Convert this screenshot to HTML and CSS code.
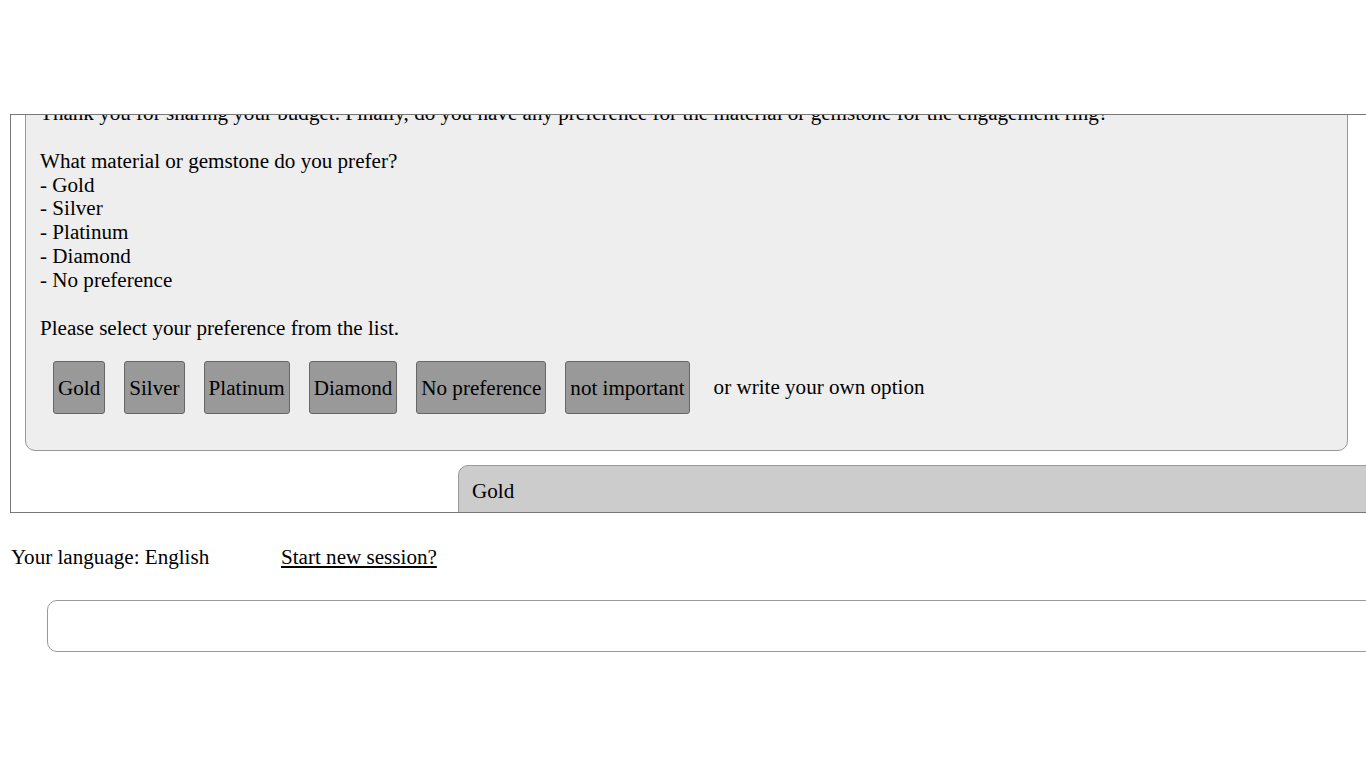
FILE: index.html
```html
<!DOCTYPE html>
<html lang="en">
<head>
<meta charset="utf-8">
<title>Chat</title>
<link rel="stylesheet" href="styles.css">
</head>
<body>
<div class="page">
  <div class="top-space"></div>
  <div class="chat">
    <div class="chat-content">
      <div class="msg bot">
        <div class="msg-text">Thank you for sharing your budget. Finally, do you have any preference for the material or gemstone for the engagement ring?

What material or gemstone do you prefer?
- Gold
- Silver
- Platinum
- Diamond
- No preference

Please select your preference from the list.</div>
        <div class="options">
          <button class="opt">Gold</button>
          <button class="opt">Silver</button>
          <button class="opt">Platinum</button>
          <button class="opt">Diamond</button>
          <button class="opt">No preference</button>
          <button class="opt">not important</button>
          <span class="own">or write your own option</span>
        </div>
      </div>
      <div class="msg user">Gold</div>
    </div>
  </div>
  <div class="status">
    <span class="lang">Your language: English</span>
    <a class="new-session" href="#">Start new session?</a>
  </div>
  <div class="input-row">
    <input class="input" type="text">
  </div>
</div>
</body>
</html>
```

FILE: styles.css
```css
html, body {
  margin: 0;
  padding: 0;
  overflow: hidden;
  background: #fff;
}

body {
  font-family: "Liberation Serif", "Times New Roman", serif;
  font-size: 21.1px;
  color: #000;
}

.page {
  padding-left: 10px;
  width: 1500px;
}

.top-space {
  height: 114px;
}

.chat {
  width: 1420px;
  height: 397px;
  border: 1px solid #777;
  overflow: hidden;
}

.chat-content {
  margin-top: -28px;
}

.msg {
  border: 1px solid #999;
  border-radius: 10px;
}

.bot {
  margin-left: 14px;
  width: 1293px;
  padding: 14px 14px 0 14px;
  background: #eee;
}

.msg-text {
  white-space: pre-line;
  line-height: 23.85px;
}

.options {
  display: flex;
  align-items: center;
  gap: 19px;
  margin-top: 21px;
  padding-left: 13px;
  padding-bottom: 36px;
}

.opt {
  font-family: "Liberation Serif", "Times New Roman", serif;
  font-size: 21.1px;
  color: #000;
  background: #999;
  border: 1px solid #666;
  border-radius: 3px;
  height: 53px;
  padding: 1px 4px 0 4px;
  margin: 0;
  line-height: 24px;
}

.own {
  margin-left: 5px;
}

.user {
  margin-top: 14px;
  margin-left: 447px;
  width: 1000px;
  background: #ccc;
  border-radius: 10px 0 0 0;
  padding: 13px 13px;
  line-height: 24px;
}

.status {
  display: flex;
  margin-top: 32px;
  line-height: 24px;
  padding-left: 1px;
}

.lang {
  width: 270px;
}

.new-session {
  color: #000;
  text-decoration: underline;
}

.input-row {
  margin-top: 31px;
  padding-left: 37px;
}

.input {
  display: block;
  width: 1400px;
  height: 52px;
  box-sizing: border-box;
  border: 1px solid #999;
  border-radius: 10px;
  outline: none;
  background: #fff;
  font-family: "Liberation Serif", "Times New Roman", serif;
  font-size: 21.1px;
}
```
